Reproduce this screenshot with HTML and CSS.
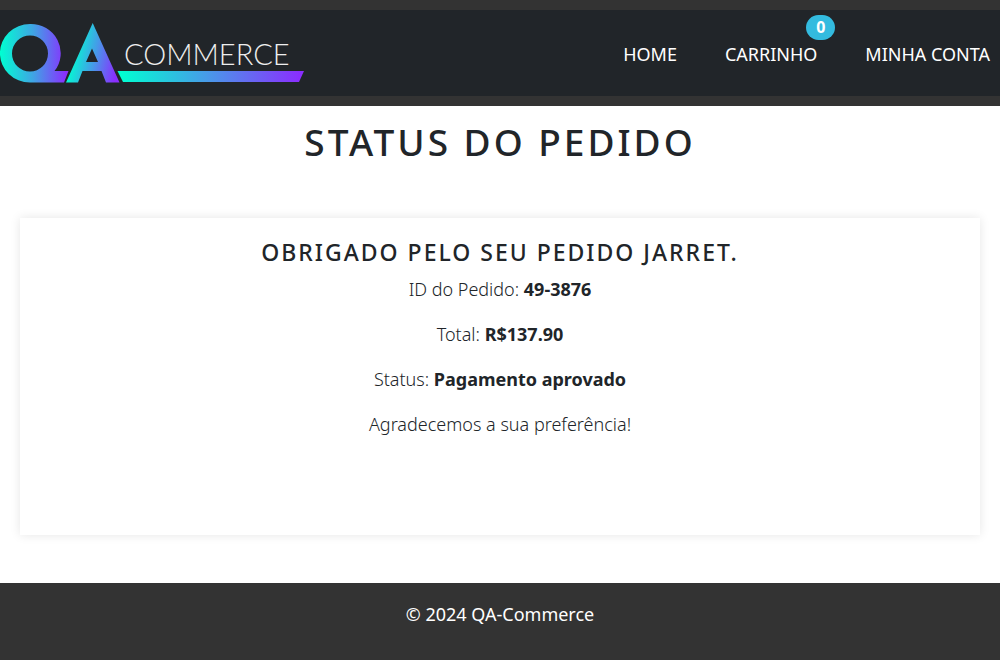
FILE: index.html
```html
<!DOCTYPE html>
<html lang="pt-BR">
<head>
<meta charset="utf-8">
<meta name="viewport" content="width=device-width, initial-scale=1">
<title>Status do Pedido - QA-Commerce</title>
<link rel="stylesheet" href="styles.css">
</head>
<body>
<header class="site-header">
  <nav class="navbar" aria-label="Principal">
    <a class="brand" href="#" aria-label="QA Commerce">
      <svg class="logo" viewBox="0 0 304 64" width="304" height="64">
        <defs>
          <linearGradient id="grad-q" gradientUnits="userSpaceOnUse" x1="0" y1="0" x2="66" y2="0">
            <stop offset="0" stop-color="#00ffd2"/><stop offset=".5" stop-color="#3fa5e4"/><stop offset="1" stop-color="#8a2eff"/>
          </linearGradient>
          <linearGradient id="grad-a" gradientUnits="userSpaceOnUse" x1="70" y1="58" x2="118" y2="58" gradientTransform="rotate(12 93 40)">
            <stop offset="0" stop-color="#00ffd2"/><stop offset=".5" stop-color="#469ae8"/><stop offset="1" stop-color="#8a2eff"/>
          </linearGradient>
          <linearGradient id="grad-bar" gradientUnits="userSpaceOnUse" x1="120" y1="0" x2="300" y2="0">
            <stop offset="0" stop-color="#00ffd2"/><stop offset=".5" stop-color="#4a97e9"/><stop offset="1" stop-color="#8a2eff"/>
          </linearGradient>
        </defs>
        <path fill="url(#grad-q)" fill-rule="evenodd" d="M30 3A30 29.200 0 0 0 30 61.500H64L68.500 50H54.500A30 29.200 0 0 0 30 3ZM30 14.500A18 18 0 1 1 30 50.500A18 18 0 1 1 30 14.500Z"/>
        <path fill="url(#grad-a)" fill-rule="evenodd" d="M92.700 2L119.500 61.500H106L101.500 50H82.500L78 61.500H66ZM92 27.500L86 41H98Z"/>
        <path fill="url(#grad-bar)" d="M117.500 50H304L299 61H123Z"/>
        <text class="logo-text" x="124" y="44">COMMERCE</text>
      </svg>
    </a>
    <ul class="nav-list">
      <li><a class="nav-link" href="#">HOME</a></li>
      <li><a class="nav-link" href="#">CARRINHO<span class="badge">0</span></a></li>
      <li><a class="nav-link" href="#">MINHA CONTA</a></li>
    </ul>
  </nav>
</header>
<main class="content">
  <h1 class="page-title">STATUS DO PEDIDO</h1>
  <section class="card">
    <h2 class="card-title">OBRIGADO PELO SEU PEDIDO JARRET.</h2>
    <p class="line">ID do Pedido: <strong>49-3876</strong></p>
    <p class="line">Total: <strong>R$137.90</strong></p>
    <p class="line">Status: <strong>Pagamento aprovado</strong></p>
    <p class="line">Agradecemos a sua preferência!</p>
  </section>
</main>
<footer class="site-footer"><p class="copyright">© 2024 QA-Commerce</p></footer>
</body>
</html>
```
FILE: styles.css
```css
* { box-sizing: border-box; }
body {
  margin: 0;
  min-height: 100vh;
  display: flex;
  flex-direction: column;
  background: #fff;
  color: #212529;
  font-family: "Noto Sans", "Open Sans", sans-serif;
  font-size: 18px;
  line-height: 27px;
}
.site-header { padding: 10px 0; background: #333; }
.navbar {
  display: flex;
  align-items: center;
  justify-content: space-between;
  min-height: 86px;
  padding-right: 10px;
  background: #212529;
}
.brand { display: flex; }
.logo { display: block; }
.logo-text {
  fill: #eee;
  font-family: Lato, sans-serif;
  font-size: 29px;
  font-weight: 300;
}
.nav-list {
  display: flex;
  gap: 48px;
  margin: 0;
  padding: 2px 0 0;
  list-style: none;
}
.nav-link { position: relative; color: #fff; text-decoration: none; }
.badge {
  position: absolute;
  top: -27px;
  right: -18px;
  padding: 0 10px;
  border-radius: 13px;
  background: #33bbdf;
  font-size: 16px;
  font-weight: 700;
  line-height: 25px;
}
.content { flex: 1; padding: 12px 20px 48px; text-align: center; }
.page-title {
  margin: 0 0 52px;
  font-size: 37px;
  font-weight: 500;
  letter-spacing: 3px;
  line-height: 48px;
}
.card {
  min-height: 317px;
  padding: 20px;
  background: #fff;
  box-shadow: 0 0 10px rgba(0, 0, 0, .1);
}
.card-title {
  margin: 0 0 10px;
  font-size: 23px;
  font-weight: 500;
  letter-spacing: 2px;
  line-height: 28px;
}
.line { margin: 0 0 18px; font-weight: 300; }
.line strong { font-weight: 700; }
.site-footer { padding: 18px 20px 32px; background: #333; color: #fff; text-align: center; }
.copyright { margin: 0; }
```
